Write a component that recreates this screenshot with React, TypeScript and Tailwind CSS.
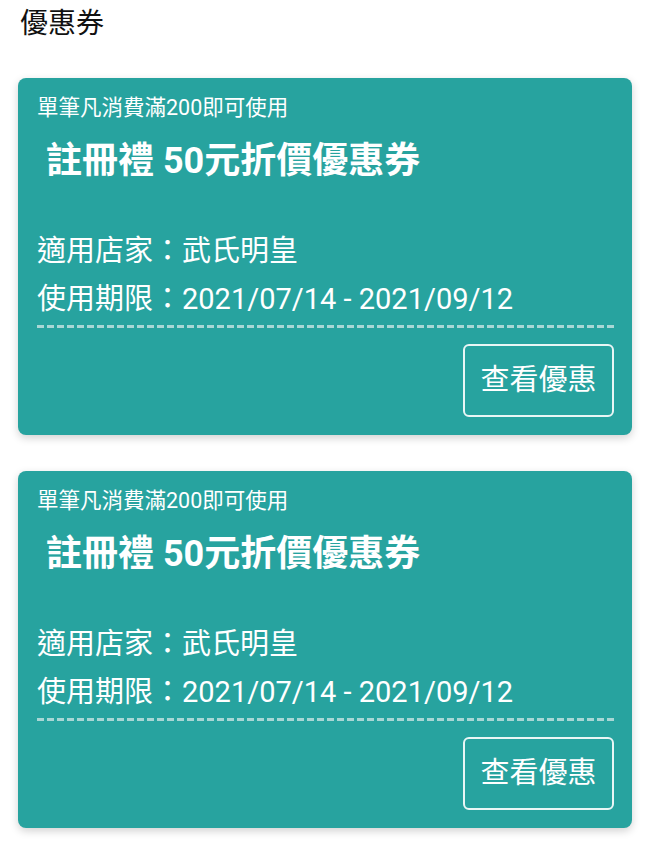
import React from 'react'

type Coupon = {
  id: number
  condition: string
  title: string
  store: string
  period: string
}

const coupons: Coupon[] = [
  { id: 1, condition: '單筆凡消費滿200即可使用', title: '註冊禮 50元折價優惠券', store: '武氏明皇', period: '2021/07/14 - 2021/09/12' },
  { id: 2, condition: '單筆凡消費滿200即可使用', title: '註冊禮 50元折價優惠券', store: '武氏明皇', period: '2021/07/14 - 2021/09/12' },
]

function CouponCard({ coupon }: { coupon: Coupon }) {
  return (
    <div className="rounded-lg bg-[#27a39f] pl-[19px] pr-[18px] pt-[18px] pb-[18px] text-white shadow-[0_3px_8px_rgba(0,0,0,0.18)]">
      <p className="text-[21.5px] leading-[24px]">{coupon.condition}</p>
      <h2 className="mt-[17px] ml-[9px] text-[36px] font-bold leading-[48px]">{coupon.title}</h2>

      {/* Details */}
      <div className="mt-[42px] text-[29px] leading-[48px]">
        <p>適用店家：{coupon.store}</p>
        <p>使用期限：{coupon.period}</p>
      </div>

      <div className="mt-[2px] h-[3px] w-full bg-[repeating-linear-gradient(90deg,#a9d7d5_0_7px,transparent_7px_10px)]" />

      <div className="mt-[16px] flex justify-end">
        <button className="h-[73px] w-[151px] rounded-md border-2 border-white/90 text-[29px] text-white">
          查看優惠
        </button>
      </div>
    </div>
  )
}

export default function App() {
  return (
    <div className="min-h-screen bg-white pl-[18px] pr-[15px] pb-[24px] font-['Roboto','Noto_Sans_CJK_TC',sans-serif]">
      <h1 className="pt-[4px] pl-[2px] text-[28px] leading-[40px] text-[#111]">優惠券</h1>

      <div className="mt-[34px] flex flex-col gap-[36px]">
        {coupons.map(coupon => (
          <CouponCard key={coupon.id} coupon={coupon} />
        ))}
      </div>
    </div>
  )
}
